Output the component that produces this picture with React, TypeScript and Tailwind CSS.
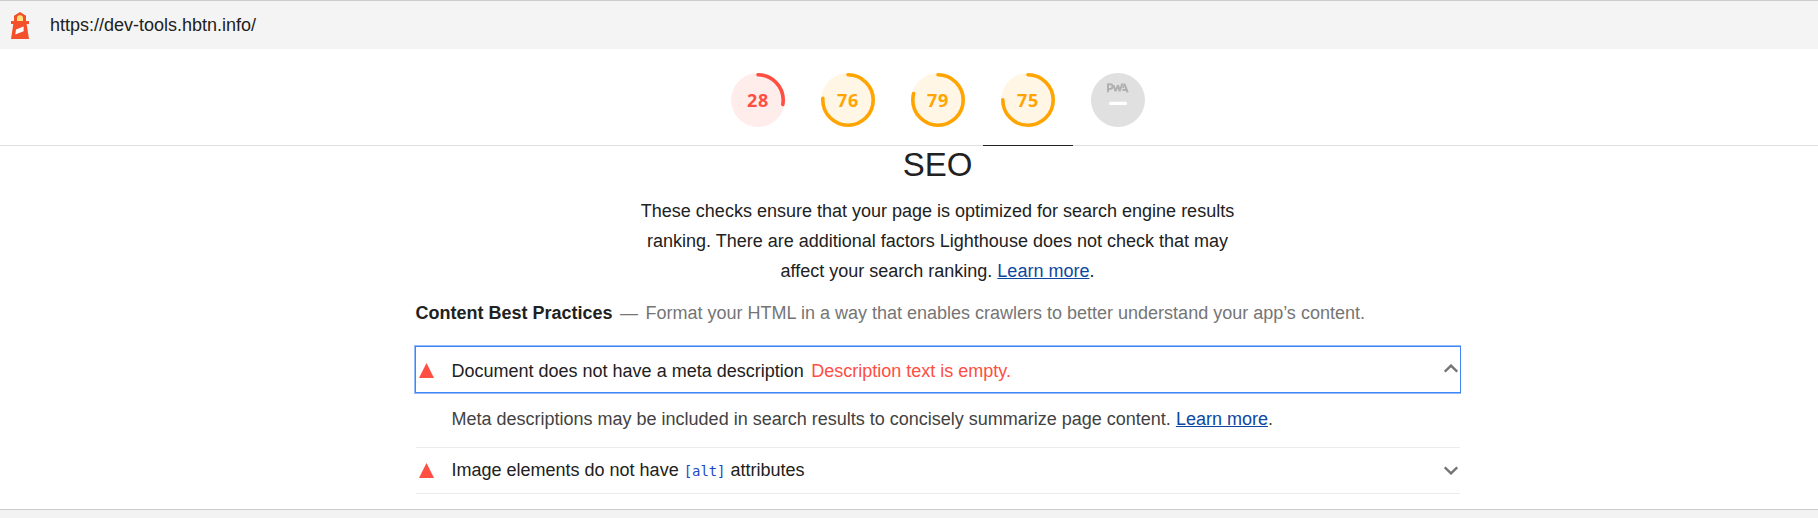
import React from "react";

type Gauge = { score: number; color: string; fill: string; active?: boolean };

const gauges: Gauge[] = [
  { score: 28, color: "#ff4e42", fill: "#ffedec" },
  { score: 76, color: "#ffa400", fill: "#fff6e6" },
  { score: 79, color: "#ffa400", fill: "#fff6e6" },
  { score: 75, color: "#ffa400", fill: "#fff6e6", active: true },
];

const CIRC = 2 * Math.PI * 25.2;

function ScoreGauge({ score, color, fill, active }: Gauge) {
  return (
    <div className="relative flex h-[97px] w-[90px] justify-center pt-[24px]">
      <svg width="54" height="54" viewBox="0 0 54 54">
        <circle cx="27" cy="27" r="27" fill={fill} />
        <circle
          cx="27"
          cy="27"
          r="25.2"
          fill="none"
          stroke={color}
          strokeWidth="3.6"
          strokeLinecap="round"
          strokeDasharray={`${(score / 100) * CIRC - 0.5} 400`}
          transform="rotate(-90 27 27)"
        />
        <text
          x="27.1"
          y="33.7"
          textAnchor="middle"
          fill={color}
          className="font-['Noto_Sans',sans-serif] text-[18px] font-bold tracking-[0.8px]"
        >
          {score}
        </text>
      </svg>
      {active && <div className="absolute bottom-0 left-0 h-px w-[90px] bg-[#212121]" />}
    </div>
  );
}

function PwaGauge() {
  return (
    <div className="flex h-[97px] w-[90px] justify-center pt-[24px]">
      <svg width="54" height="54" viewBox="0 0 54 54">
        <circle cx="27" cy="27" r="27" fill="#e0e0e0" />
        <g fill="none" stroke="#b0b0b0" strokeWidth="2">
          <path d="M17 19.2v-7.9h2.2a2.2 2.2 0 0 1 0 4.6H17" />
          <path d="M22.6 12.2l1.9 6 2.6-6 1.5 6 2.9-7.9" strokeLinejoin="bevel" />
          <path d="M33.2 10.6l3.6 8.7M31.4 16.9h4.2" />
          <path d="M33.6 11.5l-1.6 3.6" strokeWidth="1.6" />
        </g>
        <rect x="18" y="28.7" width="18" height="3.4" rx="1.5" fill="#fff" />
      </svg>
    </div>
  );
}

function Lighthouse() {
  return (
    <svg width="18" height="27" viewBox="0 0 18 27" className="shrink-0">
      <path d="M9 0l6 3.7V9h3v3h-2.4L18 27H0l2.3-15H0V9h3V3.7z" fill="#f4502a" />
      <path d="M6 9V6.2a3 3 0 0 1 6 0V9z" fill="#ffe27a" />
      <path d="M5 17.6L12.6 14.4v4.8L4.3 22.6z" fill="#fff" />
    </svg>
  );
}

function Triangle() {
  return (
    <svg width="15" height="15" viewBox="0 0 15 15" className="shrink-0">
      <path d="M7.5 0L15 15H0z" fill="#ff4e42" />
    </svg>
  );
}

function Chevron({ up }: { up?: boolean }) {
  return (
    <svg width="14" height="9" viewBox="0 0 14 9" className={up ? "mb-[3px] ml-auto shrink-0" : "ml-auto shrink-0"}>
      <path
        d={up ? "M0.8 7.7L7 1.6l6.2 6.1" : "M0.8 1.3L7 7.4l6.2-6.1"}
        fill="none"
        stroke="#757575"
        strokeWidth="2.4"
      />
    </svg>
  );
}

function LearnMore() {
  return (
    <a className="text-[#0d47a1] underline" href="#learn">
      Learn more
    </a>
  );
}

export default function App() {
  return (
    <div className="flex h-[518px] flex-col overflow-hidden bg-white font-['Liberation_Sans',Arial,sans-serif] text-[18px] text-[#212121]">
      <header className="flex h-[49px] shrink-0 items-center border-t border-[#ccc] bg-[#f4f4f4] pl-[11px]">
        <Lighthouse />
        <span className="ml-[21px] leading-[20px]">https://dev-tools.hbtn.info/</span>
      </header>

      <nav className="flex h-[97px] shrink-0 justify-center border-b border-[#e0e0e0] pl-[58px]">
        {gauges.map((g) => (
          <ScoreGauge key={g.score} {...g} />
        ))}
        <PwaGauge />
      </nav>

      <main className="ml-[416px] w-[1044px]">
        <h1 className="h-[50px] pt-[1px] pr-[1px] text-center text-[33px] leading-[36px]">SEO</h1>
        <p className="mx-auto w-[600px] pr-[1px] text-center leading-[30px]">
          These checks ensure that your page is optimized for search engine results
          <br />
          ranking. There are additional factors Lighthouse does not check that may
          <br />
          affect your search ranking. <LearnMore />.
        </p>

        <div className="-ml-[0.5px] flex h-[59px] items-start pt-[12px] leading-[30px] whitespace-pre">
          <b>Content Best Practices</b>
          <span className="ml-[7.5px] text-[#757575]">—</span>
          <span className="ml-[7.5px] text-[#757575]">
            Format your HTML in a way that enables crawlers to better understand your app’s content.
          </span>
        </div>

        <div className="-ml-[2px] flex h-[49px] w-[1047px] items-center border-y border-l border-[#94bbf9] pt-[1px] pr-[3px] pl-[4px] shadow-[inset_0_0_0_1px_#4285f4]">
          <Triangle />
          <span className="ml-[17.5px] pt-[2px]">Document does not have a meta description</span>
          <span className="ml-[7.5px] pt-[2px] text-[#ff4e42]">Description text is empty.</span>
          <Chevron up />
        </div>

        <div className="h-[54px] border-b border-[#ebebeb] pt-[10px] pl-[35.5px] leading-[30px] text-[#424242]">
          Meta descriptions may be included in search results to concisely summarize page content.{" "}
          <LearnMore />.
        </div>

        <div className="flex h-[46px] items-center border-b border-[#ebebeb] pr-[2px] pl-[3px]">
          <Triangle />
          <span className="ml-[17.5px]">
            Image elements do not have{" "}
            <code className="font-['DejaVu_Sans_Mono',monospace] text-[13.9px] text-[#1a47c8]">[alt]</code>{" "}
            attributes
          </span>
          <Chevron />
        </div>
      </main>

      <footer className="mt-auto h-[9px] border-t border-[#ccc] bg-[#f3f3f3]" />
    </div>
  );
}
